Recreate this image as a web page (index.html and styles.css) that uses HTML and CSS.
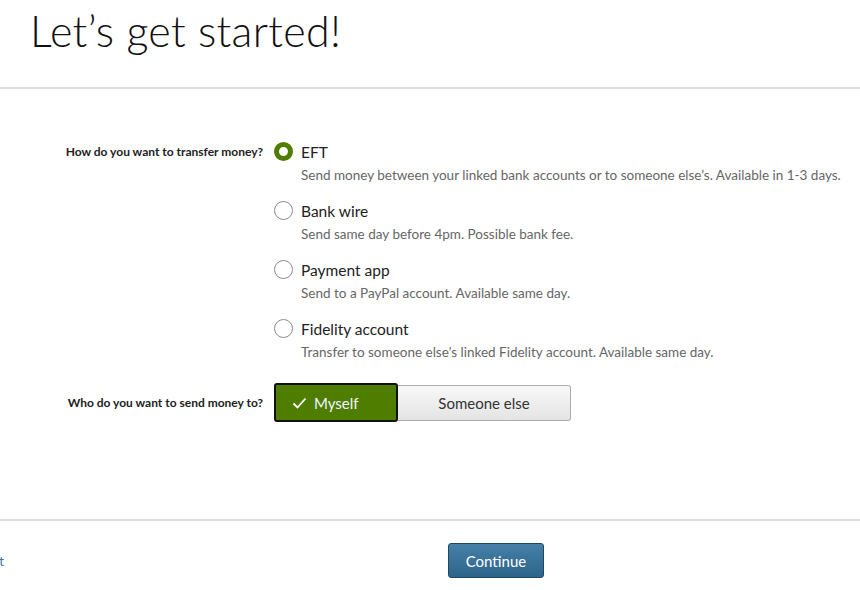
FILE: index.html
```html
<!DOCTYPE html>
<html lang="en">
<head>
    <meta charset="UTF-8">
    <meta name="viewport" content="width=device-width, initial-scale=1.0">
    <title>Transfer - Let's get started</title>
    <link rel="stylesheet" href="styles.css">
</head>
<body>
    <header class="page-header">
        <h1>Let’s get started!</h1>
    </header>

    <section class="transfer-form">
        <div class="form-row">
            <div class="row-label">How do you want to transfer money?</div>
            <div class="options">
                <label class="option">
                    <span class="radio checked"></span>
                    <span class="option-text">
                        <span class="option-title">EFT</span>
                        <span class="option-desc">Send money between your linked bank accounts or to someone else’s. Available in 1-3 days.</span>
                    </span>
                </label>
                <label class="option">
                    <span class="radio"></span>
                    <span class="option-text">
                        <span class="option-title">Bank wire</span>
                        <span class="option-desc">Send same day before 4pm. Possible bank fee.</span>
                    </span>
                </label>
                <label class="option">
                    <span class="radio"></span>
                    <span class="option-text">
                        <span class="option-title">Payment app</span>
                        <span class="option-desc">Send to a PayPal account. Available same day.</span>
                    </span>
                </label>
                <label class="option">
                    <span class="radio"></span>
                    <span class="option-text">
                        <span class="option-title">Fidelity account</span>
                        <span class="option-desc">Transfer to someone else’s linked Fidelity account. Available same day.</span>
                    </span>
                </label>
            </div>
        </div>

        <div class="form-row toggle-row">
            <div class="row-label">Who do you want to send money to?</div>
            <div class="toggle">
                <button class="toggle-btn active">
                    <svg width="15" height="12" viewBox="0 0 15 12"><path d="M1.5 6.5 L5.5 10.5 L13.5 1.5" fill="none" stroke="#fff" stroke-width="1.8"/></svg>
                    Myself
                </button>
                <button class="toggle-btn">Someone else</button>
            </div>
        </div>
    </section>

    <footer class="page-footer">
        <a class="exit-link" href="#">Exit</a>
        <button class="btn-continue">Continue</button>
    </footer>
</body>
</html>
```

FILE: styles.css
```css
body {
    margin: 0;
    font-family: Lato, "Open Sans", Arial, sans-serif;
    color: #333;
    background: #fff;
    overflow-x: hidden;
}
.page-header {
    padding: 5px 0 0 30px;
    height: 82px;
    border-bottom: 2px solid #dedede;
}
.page-header h1 {
    margin: 0;
    font-size: 43px;
    font-weight: 300;
    color: #111;
    letter-spacing: 0.3px;
}
.transfer-form {
    padding: 53px 0 97px;
    border-bottom: 2px solid #dedede;
}
.form-row {
    display: flex;
}
.row-label {
    width: 274px;
    flex-shrink: 0;
    box-sizing: border-box;
    padding-right: 11px;
    text-align: right;
    font-size: 12px;
    font-weight: 700;
    line-height: 20px;
    color: #222;
}
.options {
    display: flex;
    flex-direction: column;
    gap: 17px;
}
.option {
    display: flex;
    gap: 8px;
    cursor: pointer;
}
.radio {
    width: 19px;
    height: 19px;
    box-sizing: border-box;
    border: 1px solid #8a8a8a;
    border-radius: 50%;
    flex-shrink: 0;
}
.radio.checked {
    border: 5px solid #4f7d00;
}
.option-text {
    display: flex;
    flex-direction: column;
    gap: 4px;
}
.option-title {
    font-size: 15.5px;
    line-height: 20px;
    color: #222;
}
.option-desc {
    font-size: 13.5px;
    line-height: 18px;
    color: #666;
}
.toggle-row {
    margin-top: 22px;
    align-items: center;
}
.toggle {
    display: flex;
    align-items: center;
}
.toggle-btn {
    font-family: inherit;
    font-size: 15px;
    color: #333;
    width: 173px;
    height: 36px;
    background: linear-gradient(#f8f8f8, #e4e4e4);
    border: 1px solid #acacac;
    border-left: none;
    border-radius: 0 3px 3px 0;
}
.toggle-btn.active {
    width: 124px;
    height: 39px;
    display: flex;
    align-items: center;
    gap: 7px;
    padding-left: 16px;
    color: #f2f6ff;
    background: #4f7d00;
    border: 2px solid #111;
    border-radius: 3px;
}
.page-footer {
    display: flex;
    align-items: center;
    padding-top: 22px;
}
.exit-link {
    width: 24px;
    margin-left: -20px;
    font-size: 13px;
    color: #3a6fa8;
    text-decoration: none;
    text-align: right;
}
.btn-continue {
    margin-left: 444px;
    width: 96px;
    height: 35px;
    font-family: inherit;
    font-size: 15px;
    color: #fff;
    background: linear-gradient(#4680a8, #2d6489);
    border: 1px solid #1e4866;
    border-radius: 3px;
}
```
